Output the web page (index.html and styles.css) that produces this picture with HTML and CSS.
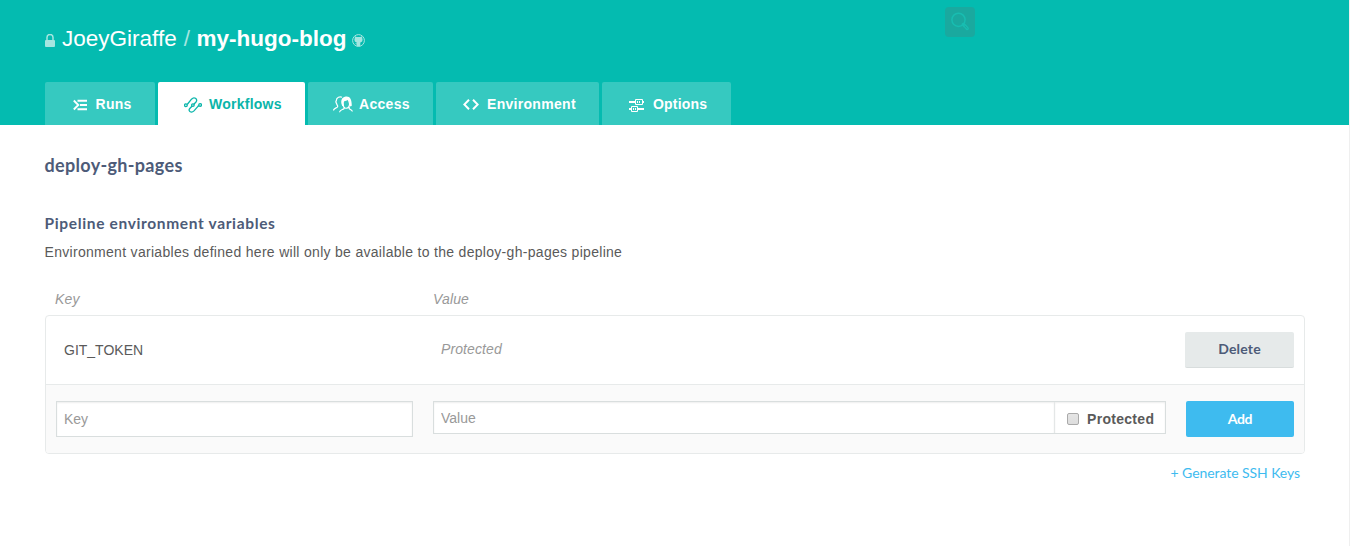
FILE: index.html
```html
<!DOCTYPE html>
<html lang="en">
<head>
<meta charset="utf-8">
<title>my-hugo-blog - Workflows</title>
<link rel="stylesheet" href="styles.css">
</head>
<body>
<div class="page">
  <header class="header">
    <h1 class="repo">
      <svg class="lock" width="10" height="13" viewBox="0 0 10 13"><path d="M2 6V3.500a3 3 0 0 1 6 0V6" fill="none" stroke="currentColor" stroke-width="1.500"/><rect y="6" width="10" height="7" rx="1" fill="currentColor"/></svg>
      <span class="owner">JoeyGiraffe</span><span class="slash">/</span><strong class="name">my-hugo-blog</strong>
      <svg class="github" width="13" height="13" viewBox="0 0 13 13"><circle cx="6.500" cy="6.500" r="5.900" fill="none" stroke="currentColor"/><path d="M3 2.300 4.700 3.100h3.600l1.700-.8.300 2c.8 2.300-.2 4-2 4.300v3.600H4.700V10.500L2.800 9.300l1.900.1V8.600C2.900 8.300 1.900 6.600 2.700 4.300z" fill="currentColor"/></svg>
    </h1>
    <nav class="tabs">
      <a class="tab runs"><svg width="15" height="12" viewBox="0 0 15 12"><path d="M.8 1.500 5.300 6 .8 10.500M4.500 1.700H14M7 6h7M4.500 10.300H14" fill="none" stroke="currentColor" stroke-width="1.900"/></svg><span>Runs</span></a>
      <a class="tab workflows active"><svg width="18" height="16" viewBox="0 0 18 16"><g fill="none" stroke="currentColor" stroke-width="1.300"><path d="M3.200 7.500 7.500 2.200Q9.500 0 11.500 1.300Q13.600 2.900 12 5L5.800 11.500Q4.300 13.200 5.900 14.500Q7.900 15.900 10 13.900L13.500 9.800Q14.100 9 14.900 8.600"/><circle cx="1.900" cy="8.300" r="1.350"/><circle cx="8.900" cy="8.100" r="1.300" fill="#fff"/><circle cx="16.100" cy="7.900" r="1.350"/></g></svg><span>Workflows</span></a>
      <a class="tab access"><svg width="20" height="17" viewBox="0 0 20 17"><g fill="none" stroke="currentColor" stroke-width="1.200"><path d="M9 1.300C7.200.2 3.300 1 3.300 4.800c-1.100 1 .1 2 .3 2.900.2 1.300 1.100 1.600 1.100 2.700 0 1.700-4.100 1.200-4.200 4.100M10.100 4.500c-1.500 1.800 0 6.500 2 7.500 1.500.7 4.300-.4 4.500-3.600.1-1.700-.8-3.300-1.400-5.200M11 11v1.700c-1.800 1.100-4.200 1.100-4.500 3.500M16.200 11v1.700c1 .7 2.900 1.200 3.200 2.800"/></g><path d="M9.200 9.900C7.200 5.800 8.300 1.600 11.800.7c5-1.500 7.200 2.500 6.900 9.200l-1.900.5c.3-3-.2-4.700-1.600-6.600-.9 1-3 1.200-4 1.500-.8 1.600-.2 3.400-.2 5.200z" fill="currentColor"/></svg><span>Access</span></a>
      <a class="tab environment"><svg width="16" height="11" viewBox="0 0 16 11"><path d="M6 .8 1.300 5.500 6 10.200M10 .8l4.700 4.700L10 10.200" fill="none" stroke="currentColor" stroke-width="2"/></svg><span>Environment</span></a>
      <a class="tab options"><svg width="15" height="13" viewBox="0 0 15 13"><path d="M0 3h6M13 3h2M0 10h2M9 10h6" stroke="currentColor" stroke-width="2"/><path d="M6.500 .5h7v5h-7zM2.500 7.500h6v5h-6z" fill="none" stroke="currentColor"/><path d="M8.500 2v2M10.500 2v2M4.500 9v2M6.500 9v2" stroke="currentColor"/></svg><span>Options</span></a>
    </nav>
    <div class="search"><svg width="20" height="20" viewBox="0 0 20 20"><circle cx="8.500" cy="7.800" r="6.600" fill="none" stroke="currentColor" stroke-width="1.500"/><path d="m13.200 12.400 1.400 1.500M14.700 13.500l2.600 3.100" fill="none" stroke="currentColor" stroke-width="3.200" stroke-linecap="round"/><path d="m15 14 2 2.300" stroke="#1aa99f" stroke-linecap="round"/></svg></div>
  </header>
  <main class="content">
    <h2 class="title">deploy-gh-pages</h2>
    <h3 class="subtitle">Pipeline environment variables</h3>
    <p class="description">Environment variables defined here will only be available to the deploy-gh-pages pipeline</p>
    <div class="columns"><span>Key</span><span>Value</span></div>
    <div class="panel">
      <div class="row">
        <span class="key">GIT_TOKEN</span>
        <span class="masked">Protected</span>
        <button class="button delete">Delete</button>
      </div>
      <div class="row form">
        <input class="field key-field" placeholder="Key">
        <div class="value-group">
          <input class="field value-field" placeholder="Value">
          <label class="protect"><input class="check" type="checkbox"><span>Protected</span></label>
        </div>
        <button class="button add">Add</button>
      </div>
    </div>
    <a class="generate">+ Generate SSH Keys</a>
  </main>
</div>
</body>
</html>
```
FILE: styles.css
```css
* { box-sizing: border-box; }
body { margin: 0; background: #fff; color: #5a5a5a; font: 14px/20px "Liberation Sans", Arial, sans-serif; overflow: hidden; }
svg { display: block; flex: none; }
.page { width: 1350px; height: 546px; border-right: 1px solid #efefef; }
.header { position: relative; height: 125px; padding: 24px 45px 0; background: #04bbb0; color: #fff; }
.repo { display: flex; margin: 0; height: 58px; font-size: 22.5px; line-height: 30px; font-weight: 400; }
.lock { margin: 10px 7px 0 0; color: #a5e6e0; }
.slash { margin: 0 6.5px 0 7px; color: #a5e6e0; }
.github { margin: 10px 0 0 6px; color: #a5e6e0; }
.tabs { display: flex; gap: 3px; }
.tab { display: flex; align-items: center; height: 43px; border-radius: 2px 2px 0 0; background: #36c9c0; font-weight: 700; letter-spacing: .3px; }
.tab svg { margin-top: 2px; }
.runs { width: 110px; padding-left: 28px; gap: 7.5px; }
.workflows { width: 147px; padding-left: 26px; gap: 7px; letter-spacing: .25px; }
.access { width: 125px; padding-left: 25px; gap: 6px; }
.environment { width: 163px; padding-left: 27px; gap: 8px; }
.options { width: 129px; padding-left: 27px; gap: 9px; letter-spacing: .2px; }
.tab.active { background: #fff; color: #0ab5aa; }
.search { position: absolute; left: 945px; top: 7px; width: 30px; height: 30px; padding: 5px; border-radius: 4px; background: #1aa99f; color: #18bdb1; }
.content { display: flex; flex-direction: column; padding: 28px 44px 0 45px; }
.title, .subtitle, .description { margin: 0 0 0 -.5px; }
.title { color: #4d5b78; font: 700 18px/24px Lato, sans-serif; letter-spacing: .32px; }
.subtitle { margin-top: 36px; color: #4d5b78; font: 700 15.5px/20px Lato, sans-serif; letter-spacing: .65px; }
.description { margin-top: 9px; letter-spacing: .3px; }
.columns { display: grid; grid-template-columns: 378px 1fr; margin: 27px 0 6px; padding-left: 10px; color: #999; font-style: italic; letter-spacing: .15px; }
.panel { border: 1px solid #e7eaea; border-radius: 4px; background: #fff; overflow: hidden; }
.row { display: grid; grid-template-columns: 357px 733px 108px; column-gap: 20px; height: 68px; padding: 16px 10px 0; }
.key { padding: 8px 0 0 8px; }
.masked { padding: 7px 0 0 8px; color: #999; font-style: italic; letter-spacing: .1px; }
.form { height: 69px; border-top: 1px solid #e7eaea; background: #fafafa; }
.button { height: 36px; padding: 0 0 1px; border: 0; border-radius: 2px; font: 700 14px/20px Lato, sans-serif; letter-spacing: .2px; }
.delete { width: 109px; margin-left: -1px; border-bottom: 1px solid #d8dddd; background: #e6eaea; color: #4d5b78; }
.add { background: #3ebbef; color: #fff; letter-spacing: -.3px; }
.field { min-width: 0; border: 1px solid #d9dede; border-radius: 0; padding: 0 7px; background: #fff; box-shadow: inset 0 1px 2px #eee; color: #5a5a5a; font: 14px/20px "Liberation Sans", Arial, sans-serif; }
.field::placeholder { color: #999; }
.key-field { height: 36px; }
.value-group { display: flex; height: 33px; border: 1px solid #d9dede; background: #fff; }
.value-field { width: 620px; border: 0; }
.protect { display: flex; align-items: center; flex: 1; border-left: 1px solid #e4e7e7; padding: 3px 0 0 12px; box-shadow: inset 0 1px 2px #eee; font-weight: 700; letter-spacing: .3px; }
.check { appearance: none; width: 12px; height: 12px; margin: 0 8px 0 0; border: 1px solid #aaa; border-radius: 2px; background: linear-gradient(#e5e5e5, #ddd); }
.generate { align-self: flex-end; margin: 9px 5px 0 0; color: #3ebbef; font: 14px/20px Lato, sans-serif; letter-spacing: -.07px; }
.options svg { margin-top: 3px; }
```
